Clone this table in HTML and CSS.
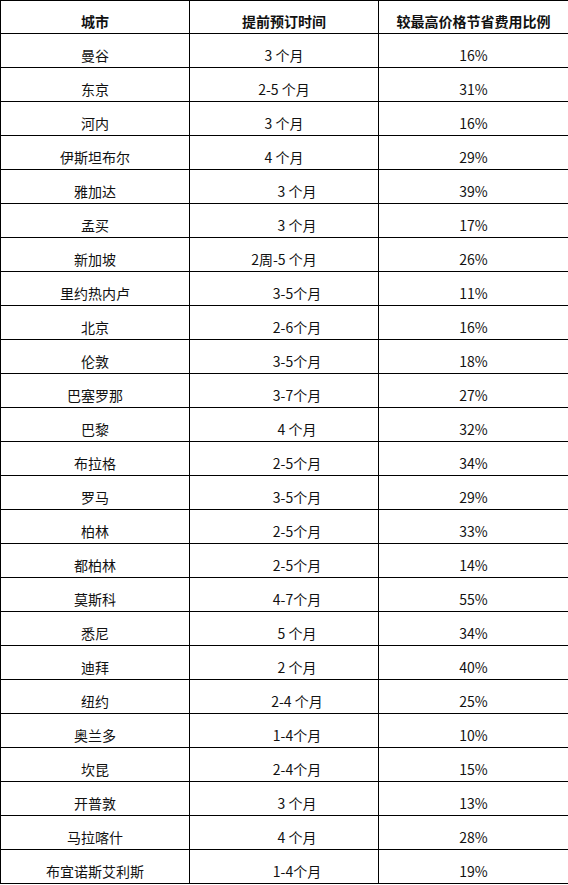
FILE: index.html
```html
<!DOCTYPE html>
<html lang="zh">
<head>
<meta charset="utf-8">
<title>提前预订时间</title>
<link rel="stylesheet" href="styles.css">
</head>
<body>
<table class="fares">
<colgroup><col class="c1"><col class="c2"><col class="c3"></colgroup>
<thead>
<tr class="head"><th>城市</th><th>提前预订时间</th><th>较最高价格节省费用比例</th></tr>
</thead>
<tbody>
<tr><td>曼谷</td><td>3 个月</td><td>16%</td></tr>
<tr><td>东京</td><td>2-5 个月</td><td>31%</td></tr>
<tr><td>河内</td><td>3 个月</td><td>16%</td></tr>
<tr><td>伊斯坦布尔</td><td>4 个月</td><td>29%</td></tr>
<tr><td>雅加达</td><td class="off">3 个月</td><td>39%</td></tr>
<tr><td>孟买</td><td class="off">3 个月</td><td>17%</td></tr>
<tr><td>新加坡</td><td>2周-5 个月</td><td>26%</td></tr>
<tr><td>里约热内卢</td><td class="off">3-5个月</td><td>11%</td></tr>
<tr><td>北京</td><td class="off">2-6个月</td><td>16%</td></tr>
<tr><td>伦敦</td><td class="off">3-5个月</td><td>18%</td></tr>
<tr><td>巴塞罗那</td><td class="off">3-7个月</td><td>27%</td></tr>
<tr><td>巴黎</td><td class="off">4 个月</td><td>32%</td></tr>
<tr><td>布拉格</td><td class="off">2-5个月</td><td>34%</td></tr>
<tr><td>罗马</td><td class="off">3-5个月</td><td>29%</td></tr>
<tr><td>柏林</td><td class="off">2-5个月</td><td>33%</td></tr>
<tr><td>都柏林</td><td class="off">2-5个月</td><td>14%</td></tr>
<tr><td>莫斯科</td><td class="off">4-7个月</td><td>55%</td></tr>
<tr><td>悉尼</td><td class="off">5 个月</td><td>34%</td></tr>
<tr><td>迪拜</td><td class="off">2 个月</td><td>40%</td></tr>
<tr><td>纽约</td><td class="off">2-4 个月</td><td>25%</td></tr>
<tr><td>奥兰多</td><td class="off">1-4个月</td><td>10%</td></tr>
<tr><td>坎昆</td><td class="off">2-4个月</td><td>15%</td></tr>
<tr><td>开普敦</td><td class="off">3 个月</td><td>13%</td></tr>
<tr><td>马拉喀什</td><td class="off">4 个月</td><td>28%</td></tr>
<tr><td>布宜诺斯艾利斯</td><td class="off">1-4个月</td><td>19%</td></tr>
</tbody>
</table>
</body>
</html>
```
FILE: styles.css
```css
html, body {
  margin: 0;
  padding: 0;
  background: #fff;
}
body {
  font-family: "Noto Sans CJK SC", "Noto Sans", sans-serif;
  font-size: 14px;
  color: #111;
}
.fares {
  border-collapse: collapse;
  table-layout: fixed;
  width: 568px;
}
.c1 { width: 189px; }
.c2 { width: 189px; }
.c3 { width: 190px; }
.fares tr {
  height: 34px;
}
.fares tr.head {
  height: 33px;
}
.fares th,
.fares td {
  border: 1px solid #000;
  text-align: center;
  vertical-align: top;
  padding: 11px 0 0;
  line-height: 20px;
  white-space: nowrap;
}
.fares th {
  font-weight: bold;
  padding-top: 10px;
}
.fares td.off {
  padding-left: 26px;
}
```
